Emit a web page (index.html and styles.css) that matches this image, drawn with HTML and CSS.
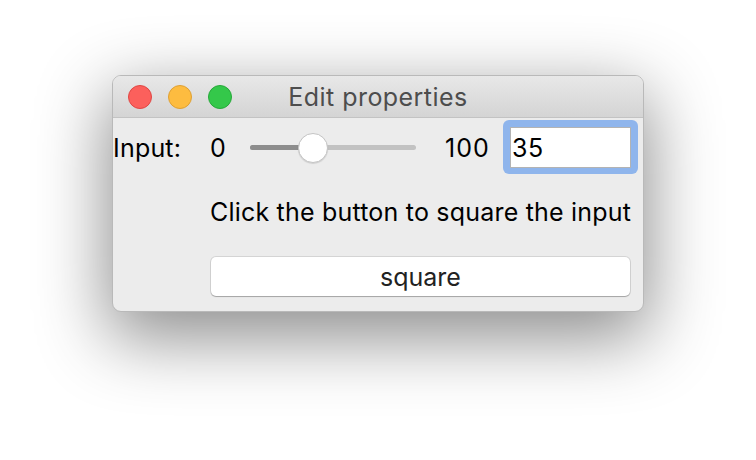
FILE: index.html
```html
<!DOCTYPE html>
<html lang="en">
<head>
<meta charset="utf-8">
<title>Edit properties</title>
<link rel="stylesheet" href="styles.css">
</head>
<body>
<div class="window">
  <div class="titlebar">
    <div class="lights">
      <span class="light red"></span>
      <span class="light yellow"></span>
      <span class="light green"></span>
    </div>
    <div class="title">Edit properties</div>
  </div>
  <div class="content">
    <div class="label">Input:</div>
    <div class="input-row">
      <span class="min">0</span>
      <div class="slider" style="--value: 0.35">
        <div class="track"><div class="fill"></div></div>
        <div class="thumb"></div>
      </div>
      <span class="max">100</span>
      <div class="focus-ring"><input class="field" type="text" value="35"></div>
    </div>
    <div class="hint">Click the button to square the input</div>
    <button class="button" type="button">square</button>
  </div>
</div>
</body>
</html>
```

FILE: styles.css
```css
html, body {
  margin: 0;
  background: #ffffff;
}
html {
  min-height: 100%;
}
body {
  box-sizing: border-box;
  min-height: 460px;
  padding: 75px 0 0 112px;
  font-family: Inter, "Noto Sans", "Liberation Sans", sans-serif;
  font-size: 25px;
  color: #000;
}
.window {
  box-sizing: border-box;
  width: 532px;
  height: 237px;
  border: 1px solid #b9b9b9;
  border-radius: 9px;
  background: #ececec;
  overflow: hidden;
  box-shadow: 0 22px 70px 4px rgba(0, 0, 0, 0.45);
}
.titlebar {
  position: relative;
  box-sizing: border-box;
  height: 42px;
  border-bottom: 1px solid #c3c3c3;
  background: linear-gradient(#e8e8e8, #d4d4d4);
  display: flex;
  align-items: center;
  justify-content: center;
}
.lights {
  position: absolute;
  left: 15px;
  top: 9px;
  display: flex;
  gap: 16px;
}
.light {
  box-sizing: border-box;
  width: 24px;
  height: 24px;
  border-radius: 50%;
  border: 1px solid;
}
.red { background: #fc605c; border-color: #df4744; }
.yellow { background: #fdbc40; border-color: #dea034; }
.green { background: #34c84a; border-color: #27a83a; }
.title {
  color: #4d4d4d;
  font-size: 25px;
  letter-spacing: 0.45px;
  line-height: 30px;
  margin-top: 1px;
}
.content {
  display: grid;
  grid-template-columns: 97px 421px;
  row-gap: 29px;
  padding-top: 9px;
  letter-spacing: 0.2px;
}
.label {
  line-height: 30px;
  align-self: center;
}
.input-row {
  display: flex;
  align-items: center;
  height: 41px;
  line-height: 30px;
}
.min {
  width: 40px;
}
.slider {
  position: relative;
  width: 166px;
  height: 30px;
  display: flex;
  align-items: center;
}
.track {
  width: 100%;
  height: 5px;
  border-radius: 3px;
  background: #c2c2c2;
  overflow: hidden;
}
.fill {
  width: calc(15px + var(--value) * 136px);
  height: 100%;
  background: #8d8d8d;
}
.thumb {
  position: absolute;
  top: 0;
  left: calc(var(--value) * 136px);
  box-sizing: border-box;
  width: 30px;
  height: 30px;
  border-radius: 50%;
  background: #fff;
  border: 1px solid #c4c4c4;
  box-shadow: 0 1px 1px rgba(0, 0, 0, 0.12);
}
.max {
  margin-left: 29px;
  letter-spacing: 1px;
}
.focus-ring {
  margin: -7px -7px -6px auto;
  padding: 7px 7px 6px;
  border-radius: 6px;
  background: #8fb5ec;
  display: flex;
}
.field {
  box-sizing: border-box;
  width: 121px;
  height: 41px;
  margin: 0;
  padding: 0 1px;
  border: 1px solid #b3b3b3;
  border-radius: 0;
  background: #fff;
  font: inherit;
  letter-spacing: 0.5px;
  color: #000;
  outline: none;
}
.hint {
  grid-column: 2;
  line-height: 30px;
  white-space: nowrap;
}
.button {
  grid-column: 2;
  box-sizing: border-box;
  width: 419px;
  height: 39px;
  margin: 1px 0 0 1px;
  padding: 0;
  border: none;
  border-radius: 5px;
  background: #fff;
  font: inherit;
  color: #222;
  box-shadow: 0 0 0 1px rgba(0, 0, 0, 0.1), 0 1px 1px rgba(0, 0, 0, 0.22);
}
```
